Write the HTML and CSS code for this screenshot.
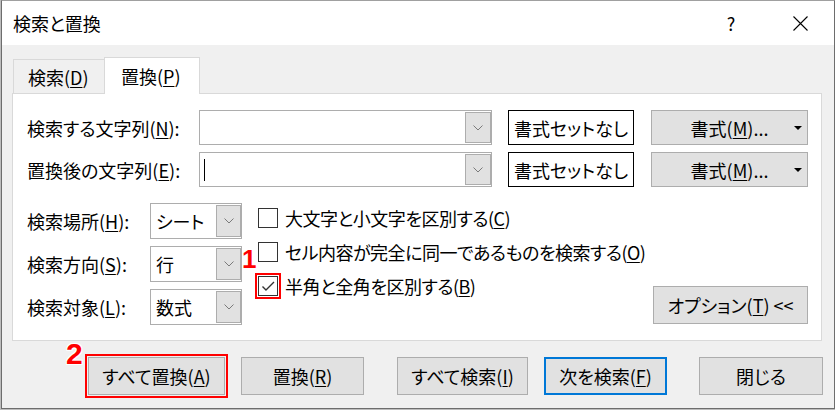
FILE: index.html
```html
<!DOCTYPE html>
<html lang="ja">
<head>
  <meta charset="UTF-8">
  <title>検索と置換</title>
  <link rel="stylesheet" href="styles.css">
</head>
<body>
  <div class="window">
    <div class="titlebar">
      <span class="title">検索と置換</span>
      <span class="help">?</span>
      <span class="close">
        <svg width="15" height="15" viewBox="0 0 15 15">
          <path d="M0.5 0.5L14.5 14.5M14.5 0.5L0.5 14.5" stroke="#000" stroke-width="1.1" fill="none"/>
        </svg>
      </span>
    </div>

    <div class="tabs">
      <span class="tab-edge"></span>
      <div class="tab">検索(<u>D</u>)</div>
      <div class="tab active">置換(<u>P</u>)</div>
      <span class="tab-fill"></span>
    </div>

    <div class="panel">
      <div class="row">
        <label class="label-long">検索する文字列(<u>N</u>):</label>
        <div class="combo">
          <div class="combo-text"></div>
          <div class="drop">
            <svg width="10" height="6" viewBox="0 0 10 6"><path d="M0.5 0.5L5 5L9.5 0.5" stroke="#7a7a7a" fill="none"/></svg>
          </div>
        </div>
        <button class="btn btn-clear">書式セットなし</button>
        <button class="btn btn-format">
          <span></span>
          <span>書式(<u>M</u>)...</span>
          <svg class="caret" width="8" height="4" viewBox="0 0 8 4"><path d="M0 0H8L4 4Z" fill="#000"/></svg>
        </button>
      </div>

      <div class="row">
        <label class="label-long">置換後の文字列(<u>E</u>):</label>
        <div class="combo">
          <div class="combo-text"><span class="cursor"></span></div>
          <div class="drop">
            <svg width="10" height="6" viewBox="0 0 10 6"><path d="M0.5 0.5L5 5L9.5 0.5" stroke="#7a7a7a" fill="none"/></svg>
          </div>
        </div>
        <button class="btn btn-clear">書式セットなし</button>
        <button class="btn btn-format">
          <span></span>
          <span>書式(<u>M</u>)...</span>
          <svg class="caret" width="8" height="4" viewBox="0 0 8 4"><path d="M0 0H8L4 4Z" fill="#000"/></svg>
        </button>
      </div>

      <div class="options">
        <div class="selects">
          <label>検索場所(<u>H</u>):</label>
          <div class="select">
            <div class="select-text">シート</div>
            <div class="drop">
              <svg width="10" height="6" viewBox="0 0 10 6"><path d="M0.5 0.5L5 5L9.5 0.5" stroke="#7a7a7a" fill="none"/></svg>
            </div>
          </div>
          <label>検索方向(<u>S</u>):</label>
          <div class="select">
            <div class="select-text">行</div>
            <div class="drop">
              <svg width="10" height="6" viewBox="0 0 10 6"><path d="M0.5 0.5L5 5L9.5 0.5" stroke="#7a7a7a" fill="none"/></svg>
            </div>
          </div>
          <label>検索対象(<u>L</u>):</label>
          <div class="select">
            <div class="select-text">数式</div>
            <div class="drop">
              <svg width="10" height="6" viewBox="0 0 10 6"><path d="M0.5 0.5L5 5L9.5 0.5" stroke="#7a7a7a" fill="none"/></svg>
            </div>
          </div>
        </div>

        <div class="checks">
          <div class="check">
            <span class="box"></span>
            <span>大文字と小文字を区別する(<u>C</u>)</span>
          </div>
          <div class="check">
            <span class="box"></span>
            <span>セル内容が完全に同一であるものを検索する(<u>O</u>)</span>
          </div>
          <div class="check">
            <span class="box marked">
              <svg width="18" height="18" viewBox="0 0 18 18"><path d="M3.5 9.5L7 13L15 5" stroke="#333" stroke-width="1.4" fill="none"/></svg>
            </span>
            <span>半角と全角を区別する(<u>B</u>)</span>
          </div>
        </div>

        <button class="btn btn-options">オプション(<u>T</u>) &lt;&lt;</button>
      </div>
    </div>

    <div class="actions">
      <button class="btn act act-all marked">すべて置換(<u>A</u>)</button>
      <button class="btn act act-one">置換(<u>R</u>)</button>
      <button class="btn act act-findall">すべて検索(<u>I</u>)</button>
      <button class="btn act act-next">次を検索(<u>F</u>)</button>
      <button class="btn act act-close">閉じる</button>
    </div>

    <span class="mark mark-1">1</span>
    <span class="mark mark-2">2</span>
  </div>
</body>
</html>
```

FILE: styles.css
```css
body {
  margin: 0;
  background-color: #bdbdbd;
  font-family: "Noto Sans CJK JP", "Noto Sans", sans-serif;
  font-size: 18px;
  font-feature-settings: "palt" 1;
  color: #000;
}

u {
  text-decoration-thickness: 1px;
  text-underline-offset: 2px;
}

.window {
  position: relative;
  box-sizing: border-box;
  margin-left: 1px;
  width: 834px;
  height: 409px;
  background-color: #f0f0f0;
  border: 1px solid #6d6d6d;
  border-top-color: #a0a0a0;
}

.titlebar {
  display: flex;
  align-items: center;
  height: 44px;
  padding-left: 11px;
  background-color: #fff;
}

.titlebar .title {
  flex: 1;
}

.titlebar .help {
  width: 20px;
  text-align: center;
}

.titlebar .close {
  display: flex;
  margin-left: 52px;
  margin-right: 26px;
}

.tabs {
  display: flex;
  align-items: flex-end;
  height: 49px;
  width: 810px;
  margin-left: 10px;
}

.tab-edge {
  width: 1px;
  border-bottom: 1px solid #d9d9d9;
}

.tab {
  box-sizing: border-box;
  display: flex;
  align-items: center;
  height: 35px;
  width: 91px;
  padding-left: 14px;
  border: 1px solid #d9d9d9;
  border-right: none;
  background-color: #f0f0f0;
}

.tab.active {
  height: 37px;
  width: 96px;
  padding-left: 16px;
  border-right: 1px solid #d9d9d9;
  border-bottom: none;
  background-color: #fff;
}

.tab-fill {
  flex: 1;
  border-bottom: 1px solid #d9d9d9;
}

.panel {
  box-sizing: border-box;
  width: 810px;
  height: 247px;
  margin-left: 10px;
  padding: 16px 13px 0 14px;
  background-color: #fff;
  border: 1px solid #d9d9d9;
  border-top: none;
}

.row {
  display: flex;
  align-items: center;
  height: 35px;
}

.row + .row {
  margin-top: 7px;
}

.label-long {
  width: 172px;
}

.combo,
.select {
  box-sizing: border-box;
  display: flex;
  border: 1px solid #adadad;
  padding: 1px 0 1px 1px;
  background-color: #fff;
}

.combo {
  width: 293px;
  height: 35px;
}

.combo-text,
.select-text {
  flex: 1;
  display: flex;
  align-items: center;
}

.cursor {
  width: 1px;
  height: 22px;
  margin-left: 3px;
  background-color: #000;
}

.drop {
  box-sizing: border-box;
  width: 26px;
  display: flex;
  align-items: center;
  justify-content: center;
  background-color: #e1e1e1;
  border: 1px solid #adadad;
}

.btn {
  box-sizing: border-box;
  font: inherit;
  color: #000;
  background-color: #e1e1e1;
  border: 1px solid #adadad;
  padding: 0;
  margin: 0;
  white-space: nowrap;
}

.btn-clear {
  width: 126px;
  height: 35px;
  margin-left: 16px;
  background-color: #fff;
  border-color: #000;
}

.btn-format {
  display: grid;
  grid-template-columns: 1fr auto 1fr;
  align-items: center;
  width: 157px;
  height: 35px;
  margin-left: 17px;
}

.btn-format .caret {
  justify-self: end;
  margin-right: 5px;
}

.options {
  display: flex;
  margin-top: 16px;
}

.selects {
  display: grid;
  grid-template-columns: 123px 92px;
  grid-auto-rows: 36px;
  row-gap: 7px;
  align-items: center;
}

.select {
  height: 36px;
}

.select-text {
  padding-left: 4px;
}

.select .drop {
  width: 25px;
}

.checks {
  flex: 1;
  min-width: 0;
  display: flex;
  flex-direction: column;
  gap: 14px;
  margin-left: 16px;
  padding-top: 5px;
}

.check {
  display: flex;
  align-items: center;
  height: 20px;
  gap: 7px;
  white-space: nowrap;
  letter-spacing: -0.5px;
}

.box {
  flex-shrink: 0;
  box-sizing: border-box;
  display: flex;
  align-items: center;
  justify-content: center;
  width: 20px;
  height: 20px;
  border: 1px solid #333;
  background-color: #fff;
}

.marked {
  outline: 2px solid #f00;
  outline-offset: 1px;
}

.btn-options {
  flex-shrink: 0;
  width: 155px;
  height: 38px;
  margin-top: 83px;
}

.actions {
  display: flex;
  margin-top: 16px;
}

.act {
  height: 38px;
}

.act-all {
  width: 137px;
  margin-left: 86px;
}

.act-one {
  width: 123px;
  margin-left: 16px;
}

.act-findall {
  width: 131px;
  margin-left: 33px;
}

.act-next {
  width: 123px;
  margin-left: 16px;
  border: 2px solid #0078d7;
}

.act-close {
  width: 124px;
  margin-left: 32px;
}

.mark {
  position: absolute;
  font-family: "Liberation Sans", Arial, sans-serif;
  font-weight: bold;
  line-height: 1;
  color: #f00;
  text-shadow: 1px 1px 0 #fff, -1px -1px 0 #fff, 1px -1px 0 #fff, -1px 1px 0 #fff;
}

.mark-1 {
  left: 240px;
  top: 245px;
  font-size: 26px;
}

.mark-2 {
  left: 64px;
  top: 338px;
  font-size: 30px;
}
```
